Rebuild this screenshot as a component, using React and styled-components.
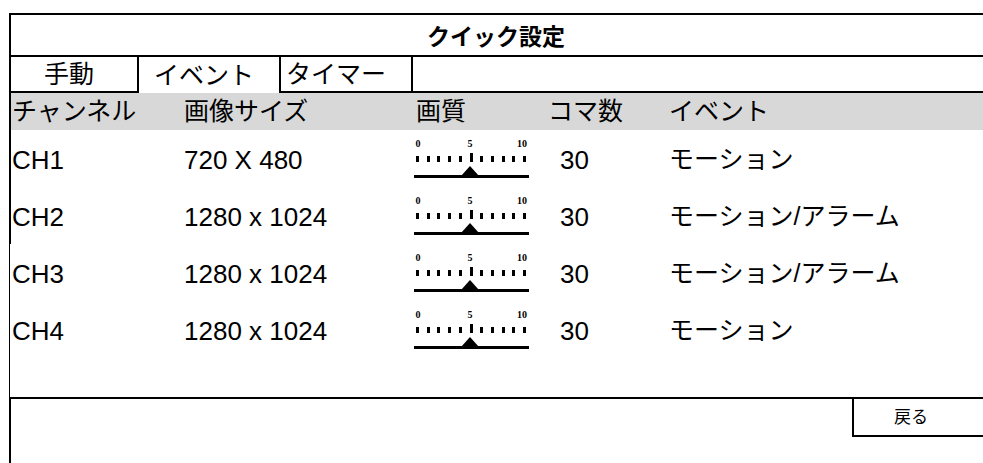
import React from 'react';
import styled, { createGlobalStyle } from 'styled-components';

const Global = createGlobalStyle`
  html, body {
    margin: 0;
    padding: 0;
    background: #fff;
  }
  body {
    font-family: "Liberation Sans", "Noto Sans CJK JP", sans-serif;
    color: #000;
  }
  * { box-sizing: border-box; }
`;

const Page = styled.div`
  height: 463px;
  padding: 13px 0 0 9px;
  overflow: hidden;
`;

const Panel = styled.div`
  display: flex;
  flex-direction: column;
  height: 100%;
`;

const Title = styled.div`
  height: 44px;
  border-top: 2px solid #000;
  border-left: 2px solid #000;
  border-bottom: 2px solid #000;
  display: flex;
  align-items: center;
  justify-content: center;
  font-size: 23px;
  font-weight: bold;
  padding-right: 2px;
`;

const TabRow = styled.div`
  display: flex;
  height: 36px;
  border-left: 2px solid #000;
`;

const Tab = styled.div`
  width: ${(p) => p.$w}px;
  border-right: 2px solid #000;
  border-bottom: ${(p) => (p.$active ? 'none' : '2px solid #000')};
  display: flex;
  align-items: center;
  justify-content: flex-start;
  padding-left: ${(p) => p.$pad}px;
  font-size: 25px;
  line-height: 1;
`;

const TabFill = styled.div`
  flex: 1;
  border-bottom: 2px solid #000;
`;

const Grid = styled.div`
  display: grid;
  grid-template-columns: 172px 232px 132px 121px 1fr;
  align-items: center;
  border-left: ${(p) => (p.$thin ? '1px' : '2px')} solid #000;
  padding-left: ${(p) => (p.$thin ? 2 : 1)}px;
`;

const HeaderRow = styled(Grid)`
  height: 37px;
  background: #d8d8d8;
  font-size: 25px;
  line-height: 1;
`;

const Row = styled(Grid)`
  height: 57px;
  font-size: 26px;
  line-height: 1;
  padding-top: 2px;
`;

const Cell = styled.div`
  white-space: nowrap;
  padding-left: ${(p) => p.$pad || 0}px;
  font-size: ${(p) => p.$size || 'inherit'};
`;

const SliderCell = styled.div`
  display: flex;
  align-items: center;
  margin-left: -4px;
`;

const Spacer = styled.div`
  height: 39px;
  border-left: 1px solid #000;
`;

const Footer = styled.div`
  flex: 1;
  border-top: 2px solid #000;
  border-left: 2px solid #000;
  display: flex;
  justify-content: flex-end;
  align-items: flex-start;
`;

const BackButton = styled.div`
  width: 131px;
  height: 38px;
  border-left: 2px solid #000;
  border-bottom: 2px solid #000;
  display: flex;
  align-items: center;
  justify-content: flex-start;
  padding-left: 40px;
  font-size: 17px;
  line-height: 1;
`;

const Quality = () => {
  const ticks = Array.from({ length: 11 }, (_, i) => 5 + Math.round(i * 10.7));
  return (
    <svg width="122" height="44" viewBox="0 0 122 44">
      <g fontFamily="'Liberation Serif', serif" fontWeight="bold" fontSize="10" fill="#000">
        <text x="6" y="9" textAnchor="middle">0</text>
        <text x="58" y="9" textAnchor="middle">5</text>
        <text x="110" y="9" textAnchor="middle">10</text>
      </g>
      {ticks.map((x, i) => (
        <rect
          key={i}
          x={x - 1}
          y={i === 5 ? 15 : 18}
          width="3"
          height={i === 5 ? 9 : 6}
          fill="#000"
        />
      ))}
      <polygon points="58,28 49,38 67,38" fill="#000" />
      <rect x="2" y="37" width="115" height="3" fill="#000" />
    </svg>
  );
};

const channels = [
  { ch: 'CH1', size: '720 X 480', fps: 30, event: 'モーション' },
  { ch: 'CH2', size: '1280 x 1024', fps: 30, event: 'モーション/アラーム' },
  { ch: 'CH3', size: '1280 x 1024', fps: 30, event: 'モーション/アラーム', thin: true },
  { ch: 'CH4', size: '1280 x 1024', fps: 30, event: 'モーション', thin: true },
];

export default function App() {
  return (
    <Page>
      <Global />
      <Panel>
        <Title>クイック設定</Title>
        <TabRow>
          <Tab $w={128} $pad={33}>手動</Tab>
          <Tab $w={142} $active $pad={15}>イベント</Tab>
          <Tab $w={132} $pad={5}>タイマー</Tab>
          <TabFill />
        </TabRow>
        <HeaderRow>
          <Cell>チャンネル</Cell>
          <Cell>画像サイズ</Cell>
          <Cell>画質</Cell>
          <Cell>コマ数</Cell>
          <Cell>イベント</Cell>
        </HeaderRow>
        {channels.map((c) => (
          <Row key={c.ch} $thin={c.thin}>
            <Cell>{c.ch}</Cell>
            <Cell>{c.size}</Cell>
            <SliderCell>
              <Quality />
            </SliderCell>
            <Cell $pad={12}>{c.fps}</Cell>
            <Cell $size="25px">{c.event}</Cell>
          </Row>
        ))}
        <Spacer />
        <Footer>
          <BackButton>戻る</BackButton>
        </Footer>
      </Panel>
    </Page>
  );
}
